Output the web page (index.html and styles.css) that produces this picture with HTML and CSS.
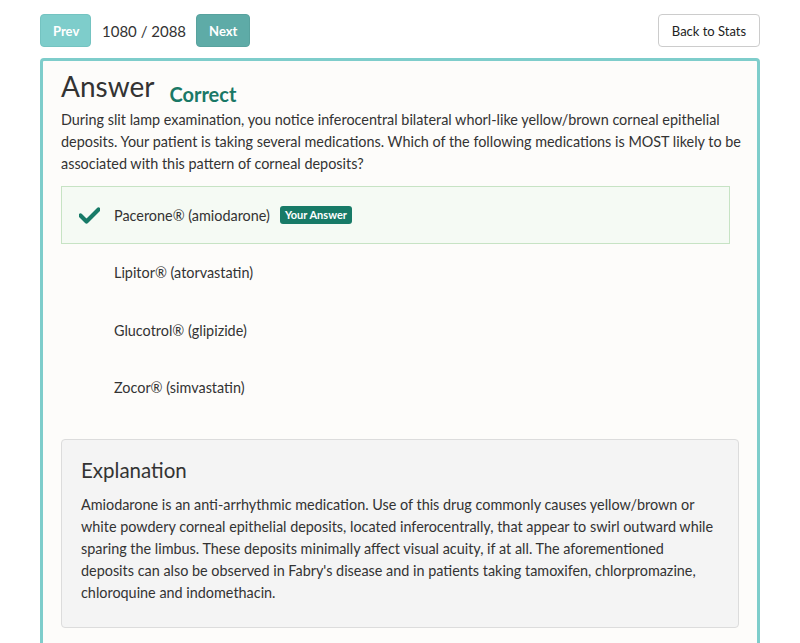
FILE: index.html
```html
<!DOCTYPE html>
<html>
<head>
<meta charset="utf-8">
<link rel="stylesheet" href="styles.css">
</head>
<body>
<div class="page">
  <div class="topbar">
    <div class="nav">
      <button class="btn btn-prev">Prev</button>
      <span class="count">1080 / 2088</span>
      <button class="btn btn-next">Next</button>
    </div>
    <button class="btn btn-back">Back to Stats</button>
  </div>
  <div class="card">
    <div class="title-row">
      <h1 class="title">Answer</h1>
      <span class="status">Correct</span>
    </div>
    <p class="question">During slit lamp examination, you notice inferocentral bilateral whorl-like yellow/brown corneal epithelial deposits. Your patient is taking several medications. Which of the following medications is MOST likely to be associated with this pattern of corneal deposits?</p>
    <ul class="options">
      <li class="option option-correct">
        <span class="check"><svg width="21" height="17" viewBox="0 0 21 17"><path d="M1.5 8.5 L7.5 14.5 L19.5 2.5" fill="none" stroke="#177a67" stroke-width="4.2" stroke-linecap="round" stroke-linejoin="round"/></svg></span>
        <span class="opt-text">Pacerone® (amiodarone)</span>
        <span class="badge">Your Answer</span>
      </li>
      <li class="option"><span class="check"></span><span class="opt-text">Lipitor® (atorvastatin)</span></li>
      <li class="option"><span class="check"></span><span class="opt-text">Glucotrol® (glipizide)</span></li>
      <li class="option"><span class="check"></span><span class="opt-text">Zocor® (simvastatin)</span></li>
    </ul>
    <div class="explanation">
      <h2 class="exp-title">Explanation</h2>
      <p class="exp-text">Amiodarone is an anti-arrhythmic medication. Use of this drug commonly causes yellow/brown or white powdery corneal epithelial deposits, located inferocentrally, that appear to swirl outward while sparing the limbus. These deposits minimally affect visual acuity, if at all. The aforementioned deposits can also be observed in Fabry's disease and in patients taking tamoxifen, chlorpromazine, chloroquine and indomethacin.</p>
    </div>
  </div>
</div>
</body>
</html>
```
FILE: styles.css
```css
* { box-sizing: border-box; }
html, body { margin: 0; padding: 0; background: #fff; }
body {
  font-family: Lato, "Open Sans", sans-serif;
  color: #333;
  font-size: 14.4px;
}
.page {
  width: 720px;
  margin: 0 auto;
  padding-top: 14px;
}
.topbar {
  display: flex;
  justify-content: space-between;
  align-items: center;
  height: 33px;
}
.nav {
  display: flex;
  align-items: center;
}
.btn {
  font-family: Lato, sans-serif;
  height: 33px;
  border-radius: 4px;
  font-size: 13px;
  padding: 0 12px;
  cursor: pointer;
}
.btn-prev {
  width: 51px;
  background: #7ecdcb;
  border: 1px solid #74c3c1;
  color: #fff;
  font-weight: 700;
}
.btn-next {
  width: 54px;
  background: #5eaba7;
  border: 1px solid #58a29e;
  color: #fff;
  font-weight: 700;
}
.count {
  font-size: 15px;
  color: #333;
  margin: 0 10px 0 11px;
}
.btn-back {
  width: 102px;
  background: #fff;
  border: 1px solid #ccc;
  color: #222;
  padding: 0;
}
.card {
  margin-top: 11px;
  border: 3px solid #7ecdcb;
  border-radius: 4px;
  background: #fdfcfa;
  padding: 8px 18px 20px 18px;
  min-height: 600px;
}
.title-row {
  display: flex;
  align-items: baseline;
}
.title {
  font-size: 28px;
  font-weight: 400;
  margin: 0;
  line-height: 34px;
  color: #333;
}
.status {
  margin-left: 15px;
  font-size: 20px;
  font-weight: 700;
  color: #1a7866;
  position: relative;
  top: 5px;
}
.question {
  margin: 6px -8px 0 0;
  line-height: 22px;
}
.options {
  list-style: none;
  margin: 11px 0 0 0;
  padding: 0;
  width: 669px;
}
.option {
  display: flex;
  align-items: center;
  height: 57.5px;
  padding-left: 17px;
  border: 1px solid transparent;
}
.option-correct {
  background: #f5faf4;
  border-color: #c7e3c4;
  height: 58px;
}
.check {
  width: 35px;
  display: flex;
  align-items: center;
}
.badge {
  margin-left: 10px;
  background: #177a67;
  color: #fff;
  font-size: 11px;
  font-weight: 700;
  padding: 3px 5px;
  border-radius: 3px;
  line-height: 12px;
}
.explanation {
  margin-top: 22px;
  background: #f4f4f4;
  border: 1px solid #dcdcdc;
  border-radius: 4px;
  padding: 17px 19px 23px 19px;
}
.exp-title {
  margin: 0;
  font-size: 20.5px;
  font-weight: 400;
  line-height: 26px;
  color: #333;
}
.exp-text {
  margin: 11px 0 0 0;
  line-height: 22px;
}
```
